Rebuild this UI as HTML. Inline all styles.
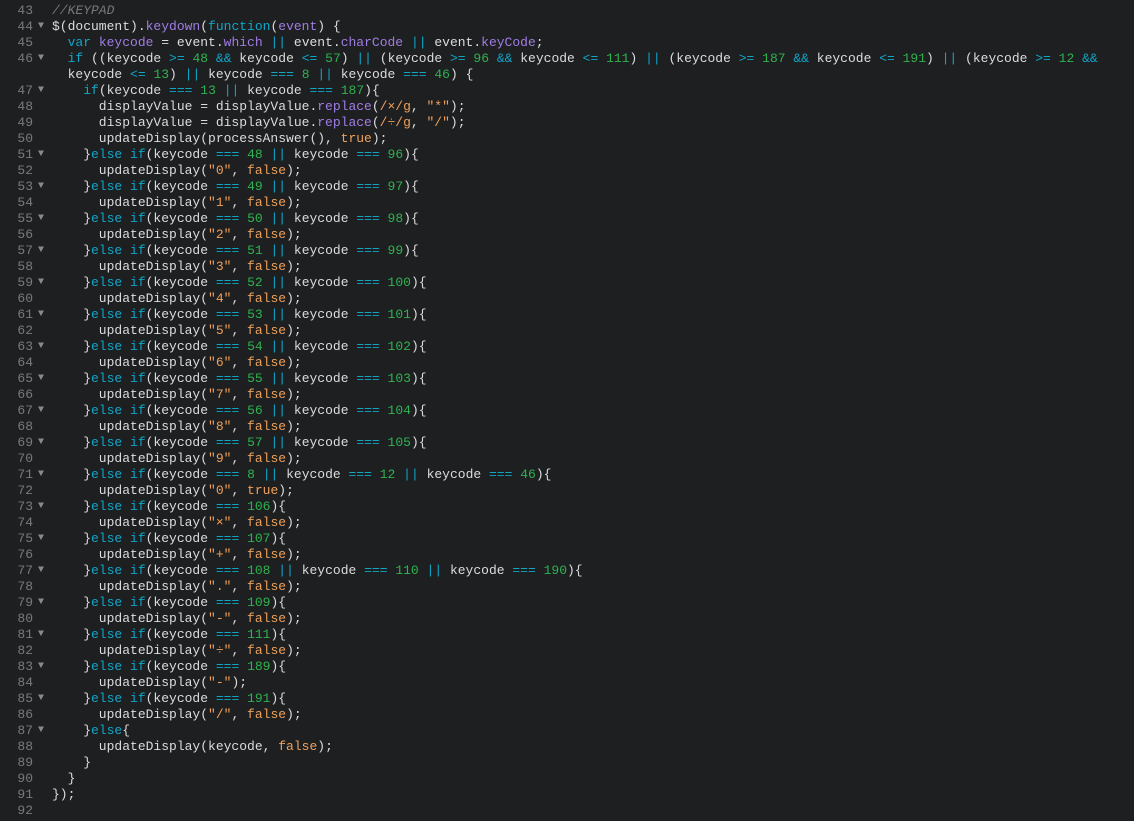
<!DOCTYPE html>
<html><head><meta charset="utf-8"><style>
body{margin:0;background:#1e1f21;width:1134px;height:821px;overflow:hidden;font-family:"Liberation Mono",monospace;font-size:13px;color:#dcdcdc}
.r{position:relative;height:16px;line-height:16px;white-space:pre}
.g{position:absolute;left:0;width:33px;text-align:right;color:#7a7a7a}
.a{position:absolute;left:38px;color:#8a8a8a;font-size:10px}
.t{position:absolute;left:52px}
.k{color:#10a6c8}.n{color:#2fb24f}.s{color:#f0a05a}.p{color:#a07ce4}.c{color:#777;font-style:italic}
#w{padding-top:3px}
</style></head><body><div id="w">
<div class="r"><span class="g">43</span><span class="t"><span class="c">//KEYPAD</span></span></div>
<div class="r"><span class="g">44</span><span class="a">▼</span><span class="t">$(document).<span class="p">keydown</span>(<span class="k">function</span>(<span class="p">event</span>) {</span></div>
<div class="r"><span class="g">45</span><span class="t">  <span class="k">var</span> <span class="p">keycode</span> = event.<span class="p">which</span> <span class="k">||</span> event.<span class="p">charCode</span> <span class="k">||</span> event.<span class="p">keyCode</span>;</span></div>
<div class="r"><span class="g">46</span><span class="a">▼</span><span class="t">  <span class="k">if</span> ((keycode <span class="k">&gt;=</span> <span class="n">48</span> <span class="k">&amp;&amp;</span> keycode <span class="k">&lt;=</span> <span class="n">57</span>) <span class="k">||</span> (keycode <span class="k">&gt;=</span> <span class="n">96</span> <span class="k">&amp;&amp;</span> keycode <span class="k">&lt;=</span> <span class="n">111</span>) <span class="k">||</span> (keycode <span class="k">&gt;=</span> <span class="n">187</span> <span class="k">&amp;&amp;</span> keycode <span class="k">&lt;=</span> <span class="n">191</span>) <span class="k">||</span> (keycode <span class="k">&gt;=</span> <span class="n">12</span> <span class="k">&amp;&amp;</span></span></div>
<div class="r"><span class="t">  keycode <span class="k">&lt;=</span> <span class="n">13</span>) <span class="k">||</span> keycode <span class="k">===</span> <span class="n">8</span> <span class="k">||</span> keycode <span class="k">===</span> <span class="n">46</span>) {</span></div>
<div class="r"><span class="g">47</span><span class="a">▼</span><span class="t">    <span class="k">if</span>(keycode <span class="k">===</span> <span class="n">13</span> <span class="k">||</span> keycode <span class="k">===</span> <span class="n">187</span>){</span></div>
<div class="r"><span class="g">48</span><span class="t">      displayValue = displayValue.<span class="p">replace</span>(<span class="s">/×/g</span>, <span class="s">"*"</span>);</span></div>
<div class="r"><span class="g">49</span><span class="t">      displayValue = displayValue.<span class="p">replace</span>(<span class="s">/÷/g</span>, <span class="s">"/"</span>);</span></div>
<div class="r"><span class="g">50</span><span class="t">      updateDisplay(processAnswer(), <span class="s">true</span>);</span></div>
<div class="r"><span class="g">51</span><span class="a">▼</span><span class="t">    }<span class="k">else if</span>(keycode <span class="k">===</span> <span class="n">48</span> <span class="k">||</span> keycode <span class="k">===</span> <span class="n">96</span>){</span></div>
<div class="r"><span class="g">52</span><span class="t">      updateDisplay(<span class="s">"0"</span>, <span class="s">false</span>);</span></div>
<div class="r"><span class="g">53</span><span class="a">▼</span><span class="t">    }<span class="k">else if</span>(keycode <span class="k">===</span> <span class="n">49</span> <span class="k">||</span> keycode <span class="k">===</span> <span class="n">97</span>){</span></div>
<div class="r"><span class="g">54</span><span class="t">      updateDisplay(<span class="s">"1"</span>, <span class="s">false</span>);</span></div>
<div class="r"><span class="g">55</span><span class="a">▼</span><span class="t">    }<span class="k">else if</span>(keycode <span class="k">===</span> <span class="n">50</span> <span class="k">||</span> keycode <span class="k">===</span> <span class="n">98</span>){</span></div>
<div class="r"><span class="g">56</span><span class="t">      updateDisplay(<span class="s">"2"</span>, <span class="s">false</span>);</span></div>
<div class="r"><span class="g">57</span><span class="a">▼</span><span class="t">    }<span class="k">else if</span>(keycode <span class="k">===</span> <span class="n">51</span> <span class="k">||</span> keycode <span class="k">===</span> <span class="n">99</span>){</span></div>
<div class="r"><span class="g">58</span><span class="t">      updateDisplay(<span class="s">"3"</span>, <span class="s">false</span>);</span></div>
<div class="r"><span class="g">59</span><span class="a">▼</span><span class="t">    }<span class="k">else if</span>(keycode <span class="k">===</span> <span class="n">52</span> <span class="k">||</span> keycode <span class="k">===</span> <span class="n">100</span>){</span></div>
<div class="r"><span class="g">60</span><span class="t">      updateDisplay(<span class="s">"4"</span>, <span class="s">false</span>);</span></div>
<div class="r"><span class="g">61</span><span class="a">▼</span><span class="t">    }<span class="k">else if</span>(keycode <span class="k">===</span> <span class="n">53</span> <span class="k">||</span> keycode <span class="k">===</span> <span class="n">101</span>){</span></div>
<div class="r"><span class="g">62</span><span class="t">      updateDisplay(<span class="s">"5"</span>, <span class="s">false</span>);</span></div>
<div class="r"><span class="g">63</span><span class="a">▼</span><span class="t">    }<span class="k">else if</span>(keycode <span class="k">===</span> <span class="n">54</span> <span class="k">||</span> keycode <span class="k">===</span> <span class="n">102</span>){</span></div>
<div class="r"><span class="g">64</span><span class="t">      updateDisplay(<span class="s">"6"</span>, <span class="s">false</span>);</span></div>
<div class="r"><span class="g">65</span><span class="a">▼</span><span class="t">    }<span class="k">else if</span>(keycode <span class="k">===</span> <span class="n">55</span> <span class="k">||</span> keycode <span class="k">===</span> <span class="n">103</span>){</span></div>
<div class="r"><span class="g">66</span><span class="t">      updateDisplay(<span class="s">"7"</span>, <span class="s">false</span>);</span></div>
<div class="r"><span class="g">67</span><span class="a">▼</span><span class="t">    }<span class="k">else if</span>(keycode <span class="k">===</span> <span class="n">56</span> <span class="k">||</span> keycode <span class="k">===</span> <span class="n">104</span>){</span></div>
<div class="r"><span class="g">68</span><span class="t">      updateDisplay(<span class="s">"8"</span>, <span class="s">false</span>);</span></div>
<div class="r"><span class="g">69</span><span class="a">▼</span><span class="t">    }<span class="k">else if</span>(keycode <span class="k">===</span> <span class="n">57</span> <span class="k">||</span> keycode <span class="k">===</span> <span class="n">105</span>){</span></div>
<div class="r"><span class="g">70</span><span class="t">      updateDisplay(<span class="s">"9"</span>, <span class="s">false</span>);</span></div>
<div class="r"><span class="g">71</span><span class="a">▼</span><span class="t">    }<span class="k">else if</span>(keycode <span class="k">===</span> <span class="n">8</span> <span class="k">||</span> keycode <span class="k">===</span> <span class="n">12</span> <span class="k">||</span> keycode <span class="k">===</span> <span class="n">46</span>){</span></div>
<div class="r"><span class="g">72</span><span class="t">      updateDisplay(<span class="s">"0"</span>, <span class="s">true</span>);</span></div>
<div class="r"><span class="g">73</span><span class="a">▼</span><span class="t">    }<span class="k">else if</span>(keycode <span class="k">===</span> <span class="n">106</span>){</span></div>
<div class="r"><span class="g">74</span><span class="t">      updateDisplay(<span class="s">"×"</span>, <span class="s">false</span>);</span></div>
<div class="r"><span class="g">75</span><span class="a">▼</span><span class="t">    }<span class="k">else if</span>(keycode <span class="k">===</span> <span class="n">107</span>){</span></div>
<div class="r"><span class="g">76</span><span class="t">      updateDisplay(<span class="s">"+"</span>, <span class="s">false</span>);</span></div>
<div class="r"><span class="g">77</span><span class="a">▼</span><span class="t">    }<span class="k">else if</span>(keycode <span class="k">===</span> <span class="n">108</span> <span class="k">||</span> keycode <span class="k">===</span> <span class="n">110</span> <span class="k">||</span> keycode <span class="k">===</span> <span class="n">190</span>){</span></div>
<div class="r"><span class="g">78</span><span class="t">      updateDisplay(<span class="s">"."</span>, <span class="s">false</span>);</span></div>
<div class="r"><span class="g">79</span><span class="a">▼</span><span class="t">    }<span class="k">else if</span>(keycode <span class="k">===</span> <span class="n">109</span>){</span></div>
<div class="r"><span class="g">80</span><span class="t">      updateDisplay(<span class="s">"-"</span>, <span class="s">false</span>);</span></div>
<div class="r"><span class="g">81</span><span class="a">▼</span><span class="t">    }<span class="k">else if</span>(keycode <span class="k">===</span> <span class="n">111</span>){</span></div>
<div class="r"><span class="g">82</span><span class="t">      updateDisplay(<span class="s">"÷"</span>, <span class="s">false</span>);</span></div>
<div class="r"><span class="g">83</span><span class="a">▼</span><span class="t">    }<span class="k">else if</span>(keycode <span class="k">===</span> <span class="n">189</span>){</span></div>
<div class="r"><span class="g">84</span><span class="t">      updateDisplay(<span class="s">"-"</span>);</span></div>
<div class="r"><span class="g">85</span><span class="a">▼</span><span class="t">    }<span class="k">else if</span>(keycode <span class="k">===</span> <span class="n">191</span>){</span></div>
<div class="r"><span class="g">86</span><span class="t">      updateDisplay(<span class="s">"/"</span>, <span class="s">false</span>);</span></div>
<div class="r"><span class="g">87</span><span class="a">▼</span><span class="t">    }<span class="k">else</span>{</span></div>
<div class="r"><span class="g">88</span><span class="t">      updateDisplay(keycode, <span class="s">false</span>);</span></div>
<div class="r"><span class="g">89</span><span class="t">    }</span></div>
<div class="r"><span class="g">90</span><span class="t">  }</span></div>
<div class="r"><span class="g">91</span><span class="t">});</span></div>
<div class="r"><span class="g">92</span><span class="t"></span></div>
</div></body></html>
